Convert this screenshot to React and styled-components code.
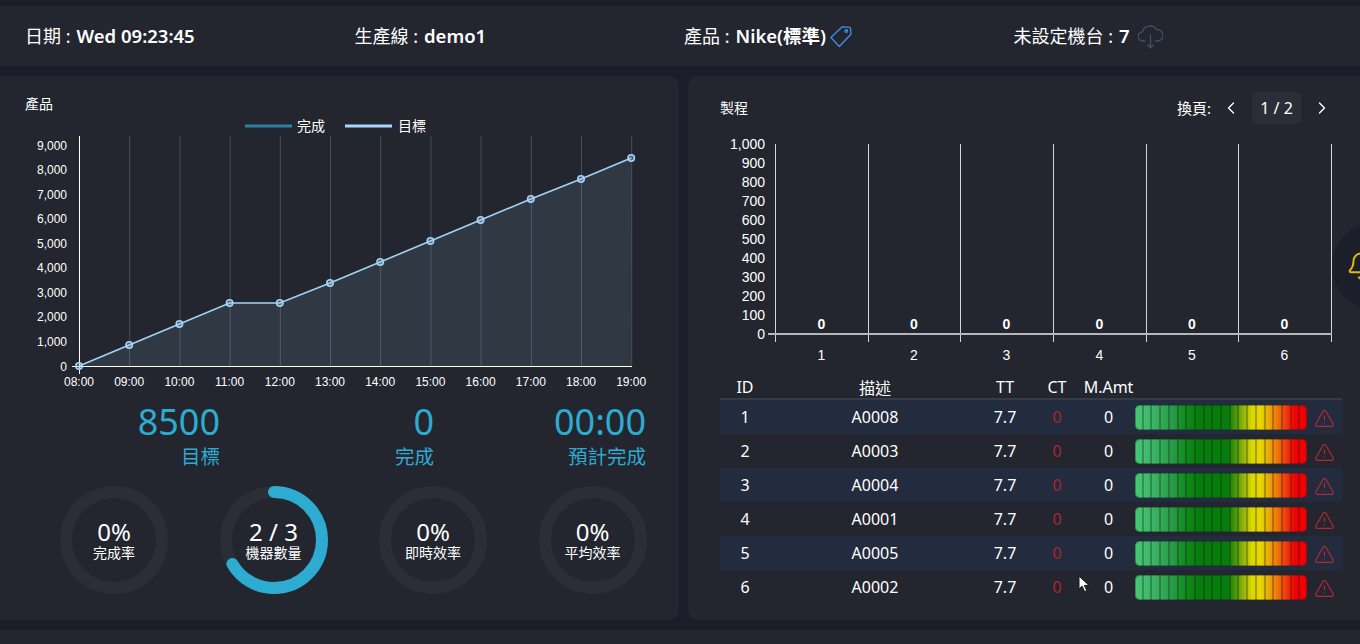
import React from "react";
import styled, { createGlobalStyle } from "styled-components";
import { ChevronLeft, ChevronRight, TriangleAlert, Bell } from "lucide-react";

const GlobalStyle = createGlobalStyle`
  html, body { margin: 0; padding: 0; background: #1b1e28; }
  body { font-family: "Noto Sans", "Noto Sans CJK TC", sans-serif; color: #fff; overflow: hidden; }
`;

const Page = styled.div`
  position: relative;
  width: 1360px;
  height: 644px;
  padding-top: 6px;
  box-sizing: border-box;
  overflow: hidden;
  display: flex;
  flex-direction: column;
  gap: 10px;
`;

const Header = styled.header`
  height: 60px;
  flex: none;
  background: #23262f;
  padding-left: 25px;
  display: grid;
  grid-template-columns: repeat(4, 329.5px);
  align-items: center;
`;

const HeaderItem = styled.div`
  display: flex;
  align-items: center;
  gap: 6px;
  font-size: 17px;
  line-height: 24px;
`;

const HeaderLabel = styled.span`
  font-size: 18px;
`;

const HeaderValue = styled.b`
  font-size: 18.5px;
  font-weight: 600;
`;

const HeaderIcon = styled.svg`
  flex: none;
  margin-left: ${(p) => p.$shift}px;
  margin-top: 2px;
`;

const Main = styled.main`
  height: 544px;
  flex: none;
  display: grid;
  grid-template-columns: 679px 672px;
  gap: 9px;
`;

const Footer = styled.footer`
  flex: 1;
  background: #23262f;
`;

const Panel = styled.section`
  background: #23262f;
  border-radius: ${(p) => (p.$side === "left" ? "0 10px 10px 0" : "10px 0 0 10px")};
  min-width: 0;
`;

const LeftTitle = styled.h2`
  margin: 0;
  padding: 18px 25px 0;
  height: 21px;
  font-size: 14px;
  font-weight: 400;
  line-height: 20px;
`;

const ChartSvg = styled.svg`
  display: block;
  font-family: "Liberation Sans", "Noto Sans CJK TC", sans-serif;
`;

const StatRow = styled.div`
  display: grid;
  grid-template-columns: 220px 214px 212px;
  margin-top: 8px;
`;

const Stat = styled.div`
  text-align: right;
  color: #2eabd0;
`;

const StatNumber = styled.div`
  font-size: 36px;
  line-height: 38px;
  font-weight: 400;
`;

const StatLabel = styled.div`
  font-size: 19.5px;
  line-height: 26px;
  margin-top: 3px;
`;

const DonutRow = styled.div`
  display: grid;
  grid-template-columns: repeat(4, 108px);
  column-gap: 51.5px;
  padding-left: 60px;
  margin-top: 16px;
`;

const Donut = styled.div`
  display: grid;
  width: 108px;
  height: 108px;
  place-items: center;
  & > * { grid-area: 1 / 1; }
`;

const DonutText = styled.div`
  text-align: center;
`;

const DonutValue = styled.div`
  font-size: 24px;
  line-height: 26px;
  font-weight: 400;
`;

const DonutLabel = styled.div`
  font-size: 14px;
  line-height: 16px;
`;

const RightBody = styled.div`
  padding: 16px 18px 0 32px;
`;

const RightHead = styled.div`
  height: 32px;
  display: flex;
  align-items: center;
  margin-bottom: 11px;
`;

const RightTitle = styled.h2`
  margin: 0;
  padding-bottom: 3px;
  font-size: 14px;
  font-weight: 400;
  flex: 1;
`;

const PagerLabel = styled.span`
  font-size: 15px;
  padding-bottom: 1px;
  margin-right: 10px;
`;

const PagerBox = styled.span`
  width: 49px;
  height: 32px;
  margin: 0 11px;
  background: #2b2e37;
  border-radius: 4px;
  display: flex;
  align-items: center;
  justify-content: center;
  font-size: 16px;
`;

const PagerEnd = styled.span`
  width: 20px;
  margin-right: 10px;
  display: flex;
`;

const TableRow = styled.div`
  display: grid;
  grid-template-columns: 50px 210px 50px 54px 49px 174px 35px;
  align-items: center;
  justify-items: center;
  height: 34px;
  font-size: 16px;
  background: ${(p) => (p.$shaded ? "#232b3e" : "transparent")};
`;

const TableHead = styled(TableRow)`
  height: 23px;
  border-bottom: 2px solid #363b49;
  margin-top: 3px;
`;

const Miss = styled.span`
  color: #a8262f;
`;

const Meter = styled.div`
  justify-self: end;
  width: 172px;
  height: 25px;
  border-radius: 5px;
  overflow: hidden;
  display: flex;
  box-shadow: inset 0 0 0 1px rgba(20, 30, 40, 0.35);
  background: linear-gradient(90deg, #46ca74 0%, #3cb565 10%, #2ba04c 20%, #0f8a1a 30%, #067d0a 37%, #067d0a 54%, #70a808 61%, #dcd800 68%, #e6d800 73%, #ef9408 80%, #f0440c 87%, #f00000 93%, #f00000 100%);
`;

const MeterCell = styled.span`
  flex: 1;
  border-right: 2px solid rgba(24, 28, 38, 0.3);
  &:last-child { border-right: 0; }
`;

const AlertCell = styled.span`
  display: flex;
  color: #b02a35;
  padding-top: 3px;
`;

const BellBubble = styled.div`
  position: absolute;
  left: 1332px;
  top: 222px;
  width: 88px;
  height: 88px;
  border-radius: 50%;
  background: #1c1f2a;
  display: flex;
  align-items: center;
  padding-left: 14px;
  box-sizing: border-box;
  color: #dcb916;
`;

const Pointer = styled.svg`
  position: absolute;
  left: 1078px;
  top: 575px;
`;

const leftY = [0, 1000, 2000, 3000, 4000, 5000, 6000, 7000, 8000, 9000];
const hours = ["08:00", "09:00", "10:00", "11:00", "12:00", "13:00", "14:00", "15:00", "16:00", "17:00", "18:00", "19:00"];
const lineY = [366, 345, 324, 303, 303, 283, 262, 241, 220, 199, 179, 158];
const hx = (i) => 79 + i * 50.2;
const vy = (v) => 366 - (v / 9000) * 221;

const stats = [
  { value: "8500", label: "目標" },
  { value: "0", label: "完成" },
  { value: "00:00", label: "預計完成" },
];

const donuts = [
  { value: "0%", label: "完成率", ratio: 0 },
  { value: "2 / 3", label: "機器數量", ratio: 2 / 3 },
  { value: "0%", label: "即時效率", ratio: 0 },
  { value: "0%", label: "平均效率", ratio: 0 },
];

const rows = [
  { id: 1, name: "A0008" },
  { id: 2, name: "A0003" },
  { id: 3, name: "A0004" },
  { id: 4, name: "A0001" },
  { id: 5, name: "A0005" },
  { id: 6, name: "A0002" },
];

const rightX = [775, 868, 960, 1053, 1146, 1238, 1331];
const rightY = [0, 100, 200, 300, 400, 500, 600, 700, 800, 900, 1000];

const TagIcon = () => (
  <HeaderIcon $shift={-2} width="22" height="22" viewBox="0 0 22 22" fill="none" stroke="#3c8de4" strokeWidth="1.4">
    <path d="M0.9 11.6 L9.3 20.4 L20.9 8.2 L20.5 2.4 Q20.4 1.1 19 1.1 L12 1 Z" strokeLinejoin="round" />
    <circle cx="16.3" cy="5" r="1.3" />
  </HeaderIcon>
);

const CloudIcon = () => (
  <HeaderIcon $shift={2} width="25" height="24" viewBox="0 0 25 24" fill="none" stroke="#3f5068" strokeWidth="1.3" strokeLinecap="round">
    <path d="M7 16 H5 A4.6 4.6 0 0 1 4.5 6.8 A7.6 7.2 0 0 1 18.5 4.6 A5.6 5.6 0 0 1 20 16 H17.5" />
    <path d="M12.5 10 V22.6 M9.8 20 L12.5 22.8 L15.2 20" />
  </HeaderIcon>
);

const ProductChart = () => {
  const points = hours.map((_, i) => `${hx(i)},${lineY[i]}`).join(" ");
  return (
    <ChartSvg width="679" height="280" viewBox="0 115 679 280">
      <rect x="245" y="124.5" width="47" height="3" fill="#2e7fa5" />
      <text x="297" y="131" fontSize="14" fill="#fff">完成</text>
      <rect x="345" y="124.5" width="47" height="3" fill="#a9d7fb" />
      <text x="398" y="131" fontSize="14" fill="#fff">目標</text>
      {hours.map((h, i) => (
        <g key={h}>
          <line
            x1={hx(i) + 0.5}
            x2={hx(i) + 0.5}
            y1="136"
            y2={i === 0 ? 374 : 366}
            stroke={i === 0 ? "#fff" : "#4b4e58"}
          />
          <text x={hx(i)} y="386" fontSize="12" fill="#fff" textAnchor="middle">{h}</text>
        </g>
      ))}
      {leftY.map((v) => (
        <text key={v} x="67" y={vy(v) + 4.5} fontSize="12" fill="#fff" textAnchor="end">
          {v.toLocaleString("en-US")}
        </text>
      ))}
      <polygon points={`79,366 ${points} 631,366`} fill="rgba(169,215,251,0.1)" />
      <line x1="72" x2="632" y1="366.5" y2="366.5" stroke="#fff" />
      <polyline points={points} fill="none" stroke="#a3d3f5" strokeWidth="1.6" />
      {hours.map((h, i) => (
        <circle key={h} cx={hx(i)} cy={lineY[i]} r="3.2" fill="rgba(169,215,251,0.3)" stroke="#a3d3f5" strokeWidth="1.6" />
      ))}
    </ChartSvg>
  );
};

const ProcessChart = () => (
  <ChartSvg width="622" height="237" viewBox="720 135 622 237">
    {rightX.map((x) => (
      <line key={x} x1={x + 0.5} x2={x + 0.5} y1="144" y2="342" stroke="#d4d5d8" />
    ))}
    {rightY.map((v) => (
      <text key={v} x="765" y={334 - (v / 1000) * 190 + 5} fontSize="14" fill="#fff" textAnchor="end">
        {v.toLocaleString("en-US")}
      </text>
    ))}
    <line x1="768" x2="1332" y1="334" y2="334" stroke="#b4b6ba" strokeWidth="2" />
    {rows.map((r, i) => {
      const mid = (rightX[i] + rightX[i + 1]) / 2;
      return (
        <g key={r.id}>
          <text x={mid} y="329" fontSize="14" fontWeight="700" fill="#fff" textAnchor="middle">0</text>
          <text x={mid} y="360" fontSize="14" fill="#fff" textAnchor="middle">{r.id}</text>
        </g>
      );
    })}
  </ChartSvg>
);

const App = () => {
  return (
    <Page>
      <GlobalStyle />
      <Header>
        <HeaderItem>
          <HeaderLabel>日期 :</HeaderLabel>
          <HeaderValue>Wed 09:23:45</HeaderValue>
        </HeaderItem>
        <HeaderItem>
          <HeaderLabel>生產線 :</HeaderLabel>
          <HeaderValue>demo1</HeaderValue>
        </HeaderItem>
        <HeaderItem>
          <HeaderLabel>產品 :</HeaderLabel>
          <HeaderValue>Nike(標準)</HeaderValue>
          <TagIcon />
        </HeaderItem>
        <HeaderItem>
          <HeaderLabel>未設定機台 :</HeaderLabel>
          <HeaderValue>7</HeaderValue>
          <CloudIcon />
        </HeaderItem>
      </Header>

      <Main>
        <Panel $side="left">
          <LeftTitle>產品</LeftTitle>
          <ProductChart />
          <StatRow>
            {stats.map((s) => (
              <Stat key={s.label}>
                <StatNumber>{s.value}</StatNumber>
                <StatLabel>{s.label}</StatLabel>
              </Stat>
            ))}
          </StatRow>
          <DonutRow>
            {donuts.map((d) => (
              <Donut key={d.label}>
                <svg width="108" height="108" viewBox="0 0 108 108">
                  <circle cx="54" cy="54" r="48" fill="none" stroke="#2b2e37" strokeWidth="12" />
                  {d.ratio > 0 && (
                    <circle
                      cx="54"
                      cy="54"
                      r="48"
                      fill="none"
                      stroke="#2eabd0"
                      strokeWidth="12"
                      strokeLinecap="round"
                      pathLength="100"
                      strokeDasharray={`${d.ratio * 100} 100`}
                      transform="rotate(-90 54 54)"
                    />
                  )}
                </svg>
                <DonutText>
                  <DonutValue>{d.value}</DonutValue>
                  <DonutLabel>{d.label}</DonutLabel>
                </DonutText>
              </Donut>
            ))}
          </DonutRow>
        </Panel>

        <Panel $side="right">
          <RightBody>
            <RightHead>
              <RightTitle>製程</RightTitle>
              <PagerLabel>換頁:</PagerLabel>
              <ChevronLeft size={20} strokeWidth={1.6} />
              <PagerBox>1 / 2</PagerBox>
              <PagerEnd>
                <ChevronRight size={20} strokeWidth={1.6} />
              </PagerEnd>
            </RightHead>
            <ProcessChart />
            <TableHead>
              <span>ID</span>
              <span>描述</span>
              <span>TT</span>
              <span>CT</span>
              <span>M.Amt</span>
            </TableHead>
            {rows.map((r, i) => (
              <TableRow key={r.id} $shaded={i % 2 === 0}>
                <span>{r.id}</span>
                <span>{r.name}</span>
                <span>7.7</span>
                <Miss>0</Miss>
                <span>0</span>
                <Meter>
                  {Array.from({ length: 20 }, (_, n) => (
                    <MeterCell key={n} />
                  ))}
                </Meter>
                <AlertCell>
                  <TriangleAlert size={21} strokeWidth={1.4} />
                </AlertCell>
              </TableRow>
            ))}
          </RightBody>
        </Panel>
      </Main>
      <Footer />

      <BellBubble>
        <Bell size={30} strokeWidth={1.6} />
      </BellBubble>
      <Pointer width="13" height="18" viewBox="0 0 13 18">
        <path d="M1 1 L1 14 L4.2 11.2 L6.6 16.6 L8.8 15.6 L6.4 10.4 L11 10.4 Z" fill="#fff" stroke="#14161d" strokeWidth="1" />
      </Pointer>
    </Page>
  );
};

export default App;
